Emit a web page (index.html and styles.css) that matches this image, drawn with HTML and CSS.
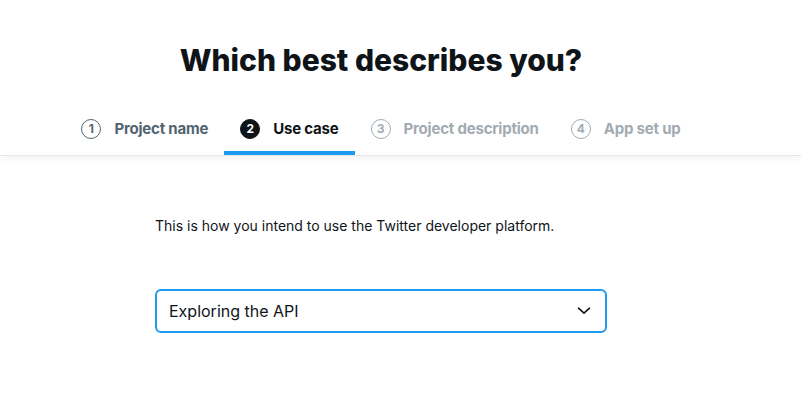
FILE: index.html
```html
<!DOCTYPE html>
<html lang="en">
<head>
<meta charset="utf-8">
<title>Which best describes you?</title>
<link rel="stylesheet" href="styles.css">
</head>
<body>
<header class="header">
  <div class="column">
    <h1 class="title">Which best describes you?</h1>
    <nav class="steps">
      <div class="step step-done"><span class="num">1</span><span class="label">Project name</span></div>
      <div class="step step-active"><span class="num">2</span><span class="label">Use case</span></div>
      <div class="step step-todo"><span class="num">3</span><span class="label">Project description</span></div>
      <div class="step step-todo"><span class="num">4</span><span class="label">App set up</span></div>
    </nav>
  </div>
</header>
<main class="column">
  <section class="form">
    <p class="hint">This is how you intend to use the Twitter developer platform.</p>
    <div class="select">
      <span class="value">Exploring the API</span>
      <svg class="chevron" width="14" height="8" viewBox="0 0 14 8" aria-hidden="true"><path d="M1.5 1.2l5.5 5 5.5-5" fill="none" stroke="#0f1419" stroke-width="1.6" stroke-linecap="round" stroke-linejoin="round"/></svg>
    </div>
  </section>
</main>
</body>
</html>
```

FILE: styles.css
```css
* { box-sizing: border-box; }
html, body { margin: 0; padding: 0; background: #fff; }
body {
  font-family: Inter, "Noto Sans", "Liberation Sans", sans-serif;
  color: #0f1419;
  width: 801px;
  height: 403px;
  overflow: hidden;
}
.column {
  width: 762px;
  display: flex;
  flex-direction: column;
  align-items: center;
}
.header {
  border-bottom: 1px solid #e4e6e8;
  box-shadow: 0 3px 8px rgba(0, 0, 0, 0.05);
}
.title {
  margin: 0;
  padding-top: 42px;
  font-size: 30px;
  line-height: 36px;
  font-weight: 800;
}
.steps {
  display: flex;
  margin-top: 41px;
}
.step {
  display: flex;
  align-items: center;
  gap: 13px;
  padding: 0 16px 12px;
  border-bottom: 4px solid transparent;
  font-size: 15px;
  font-weight: 700;
  line-height: 20px;
  letter-spacing: -0.2px;
}
.num {
  width: 20px;
  height: 20px;
  border-radius: 50%;
  border: 1.5px solid currentColor;
  display: flex;
  align-items: center;
  justify-content: center;
  font-size: 12px;
  line-height: 1;
  font-weight: 700;
  letter-spacing: 0;
}
.step-done { color: #536471; }
.step-active { color: #0f1419; border-bottom-color: #1d9bf0; }
.step-active .num { background: #0f1419; border-color: #0f1419; color: #fff; }
.step-todo { color: #a3abb2; }
.form {
  width: 452px;
  padding-top: 60px;
}
.hint {
  margin: 0;
  font-size: 14px;
  line-height: 20px;
}
.select {
  margin-top: 53px;
  height: 44px;
  border: 2px solid #1d9bf0;
  border-radius: 6px;
  display: flex;
  align-items: center;
  justify-content: space-between;
  padding: 0 14px 0 12px;
  font-size: 16px;
}
.chevron { display: block; }
```
